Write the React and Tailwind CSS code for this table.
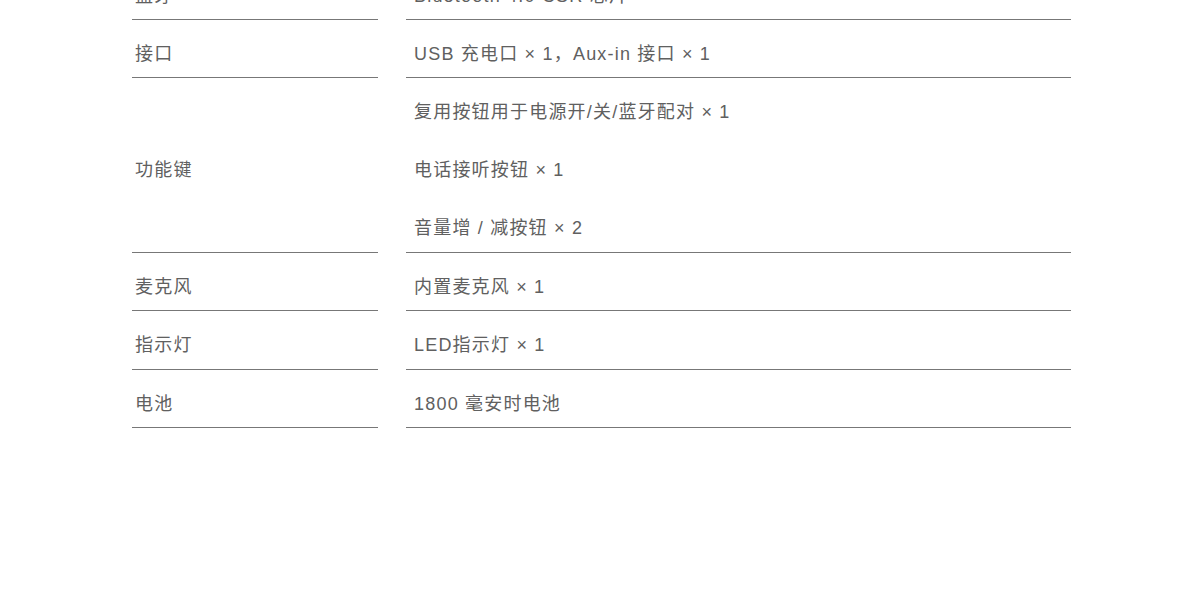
import React from 'react';

const rows = [
  { label: '蓝牙', values: ['Bluetooth 4.0 CSR 芯片'] },
  { label: '接口', values: ['USB 充电口 × 1，Aux-in 接口 × 1'] },
  {
    label: '功能键',
    values: ['复用按钮用于电源开/关/蓝牙配对 × 1', '电话接听按钮 × 1', '音量增 / 减按钮 × 2'],
  },
  { label: '麦克风', values: ['内置麦克风 × 1'] },
  { label: '指示灯', values: ['LED指示灯 × 1'] },
  { label: '电池', values: ['1800 毫安时电池'] },
];

const SpecRow = ({ label, values, tall }) => {
  const multi = values.length > 1;
  return (
    <div className="flex gap-[28px]">
      <div
        className={
          'w-[246px] border-b border-[#777] pl-[3px] ' +
          (multi ? 'flex items-center pt-[9px]' : (tall ? 'h-[59px]' : 'h-[58px]') + ' pt-[21px]')
        }
      >
        <span className="block leading-[26px]">{label}</span>
      </div>
      <div className="w-[665px] border-b border-[#777] pl-[8px]">
        {values.map((v) => (
          <div
            key={v}
            className={(multi ? 'h-[58px]' : tall ? 'h-[58px]' : 'h-[57px]') + ' pt-[21px] leading-[26px]'}
          >
            {v}
          </div>
        ))}
      </div>
    </div>
  );
};

export default function App() {
  return (
    <div
      className="h-[612px] overflow-hidden bg-white text-[18px] tracking-[1.2px] text-[#606060]"
      style={{ fontFamily: '"Liberation Sans", "Noto Sans CJK SC", sans-serif' }}
    >
      <div className="ml-[132px] mt-[-38px]">
        {rows.map((r) => (
          <SpecRow key={r.label} {...r} tall={r.label === '指示灯'} />
        ))}
      </div>
    </div>
  );
}
